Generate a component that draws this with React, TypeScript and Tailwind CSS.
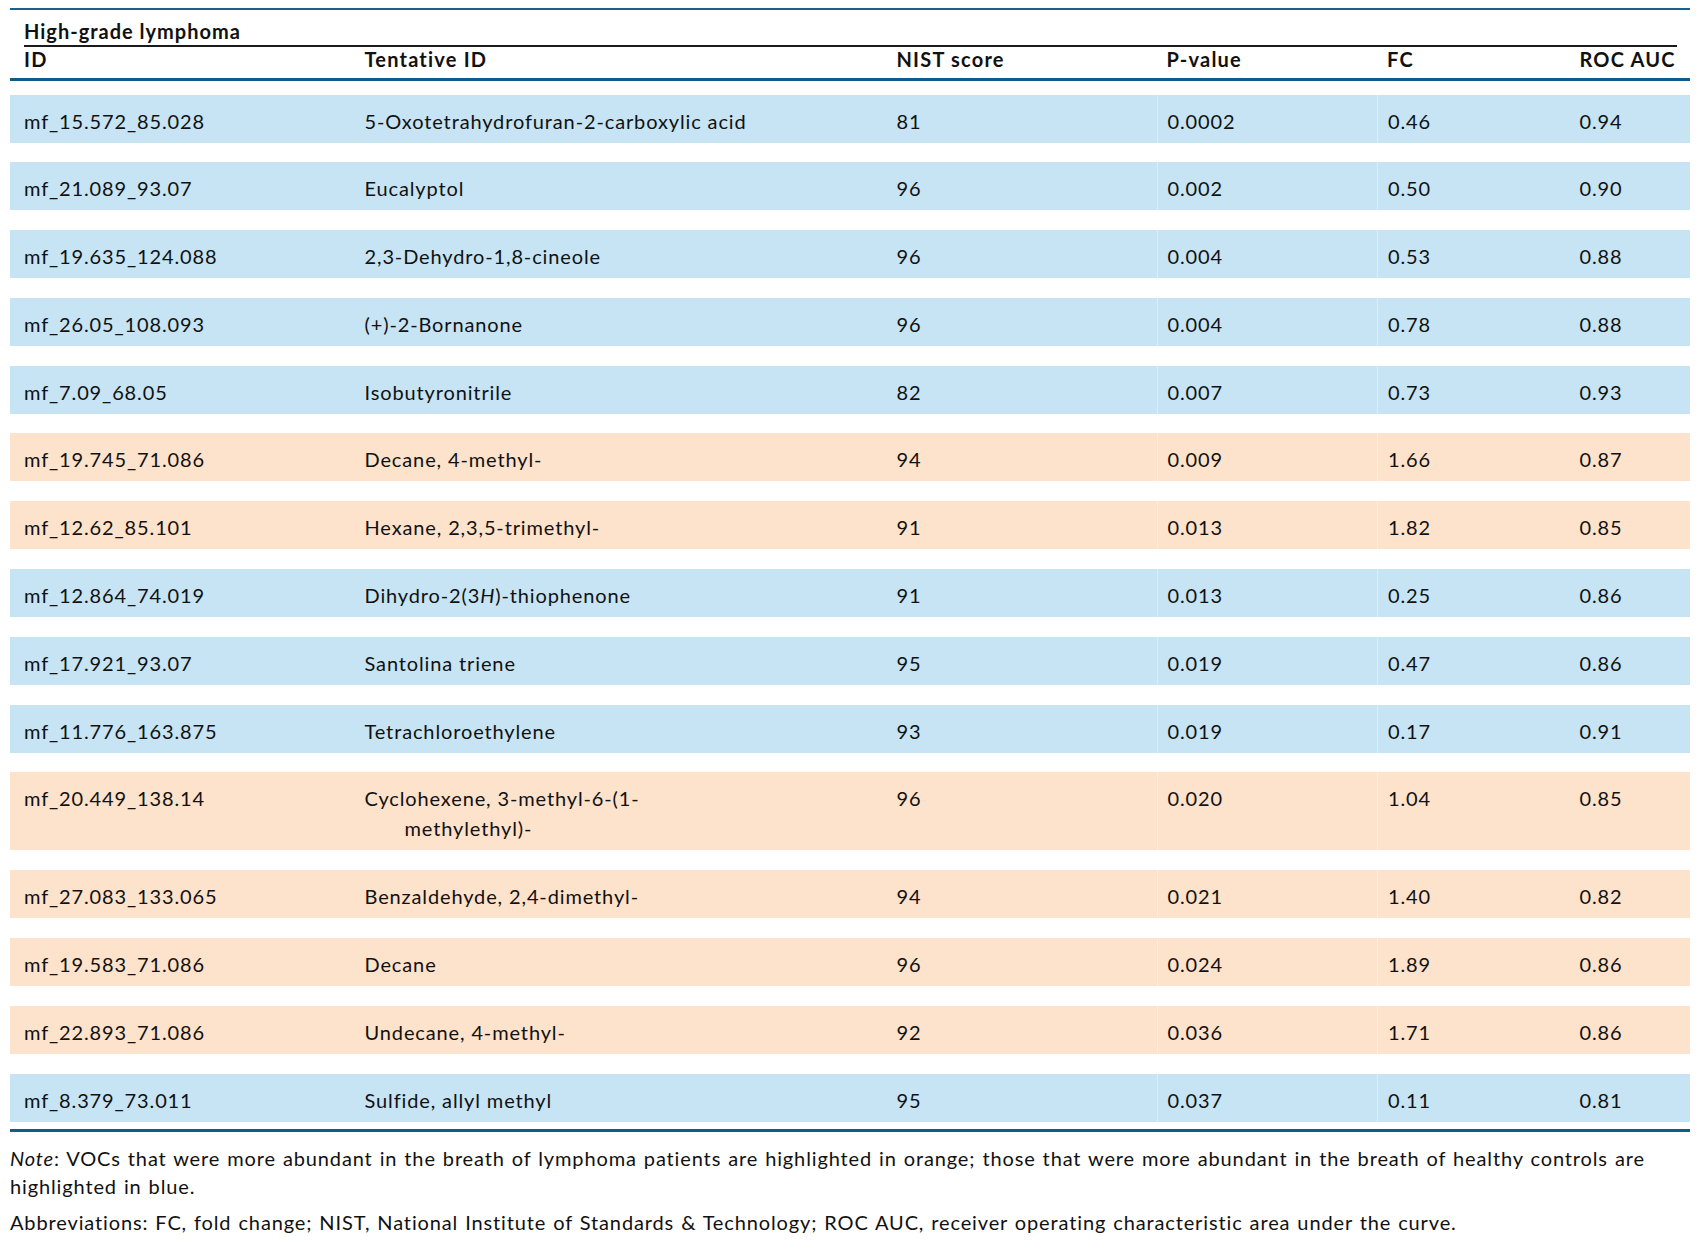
import type { ReactNode } from 'react';

type Row = {
  id: string;
  name: ReactNode;
  nist: string;
  p: string;
  fc: string;
  auc: string;
  up: boolean; // true = more abundant in lymphoma (orange)
};

const rows: Row[] = [
  { id: 'mf_15.572_85.028', name: '5-Oxotetrahydrofuran-2-carboxylic acid', nist: '81', p: '0.0002', fc: '0.46', auc: '0.94', up: false },
  { id: 'mf_21.089_93.07', name: 'Eucalyptol', nist: '96', p: '0.002', fc: '0.50', auc: '0.90', up: false },
  { id: 'mf_19.635_124.088', name: '2,3-Dehydro-1,8-cineole', nist: '96', p: '0.004', fc: '0.53', auc: '0.88', up: false },
  { id: 'mf_26.05_108.093', name: '(+)-2-Bornanone', nist: '96', p: '0.004', fc: '0.78', auc: '0.88', up: false },
  { id: 'mf_7.09_68.05', name: 'Isobutyronitrile', nist: '82', p: '0.007', fc: '0.73', auc: '0.93', up: false },
  { id: 'mf_19.745_71.086', name: 'Decane, 4-methyl-', nist: '94', p: '0.009', fc: '1.66', auc: '0.87', up: true },
  { id: 'mf_12.62_85.101', name: 'Hexane, 2,3,5-trimethyl-', nist: '91', p: '0.013', fc: '1.82', auc: '0.85', up: true },
  {
    id: 'mf_12.864_74.019',
    name: (
      <>
        Dihydro-2(3<i>H</i>)-thiophenone
      </>
    ),
    nist: '91', p: '0.013', fc: '0.25', auc: '0.86', up: false,
  },
  { id: 'mf_17.921_93.07', name: 'Santolina triene', nist: '95', p: '0.019', fc: '0.47', auc: '0.86', up: false },
  { id: 'mf_11.776_163.875', name: 'Tetrachloroethylene', nist: '93', p: '0.019', fc: '0.17', auc: '0.91', up: false },
  {
    id: 'mf_20.449_138.14',
    name: (
      <>
        <div>Cyclohexene, 3-methyl-6-(1-</div>
        <div className="pl-[40px]">methylethyl)-</div>
      </>
    ),
    nist: '96', p: '0.020', fc: '1.04', auc: '0.85', up: true,
  },
  { id: 'mf_27.083_133.065', name: 'Benzaldehyde, 2,4-dimethyl-', nist: '94', p: '0.021', fc: '1.40', auc: '0.82', up: true },
  { id: 'mf_19.583_71.086', name: 'Decane', nist: '96', p: '0.024', fc: '1.89', auc: '0.86', up: true },
  { id: 'mf_22.893_71.086', name: 'Undecane, 4-methyl-', nist: '92', p: '0.036', fc: '1.71', auc: '0.86', up: true },
  { id: 'mf_8.379_73.011', name: 'Sulfide, allyl methyl', nist: '95', p: '0.037', fc: '0.11', auc: '0.81', up: false },
];

const cols = 'grid grid-cols-[344.5px_532px_270px_220.5px_192.5px_120.5px]';

export default function App() {
  return (
    <div className="w-[1701px] h-[1245px] bg-white text-[20px] tracking-[0.87px] text-[#111] font-['Lato','Liberation_Sans',sans-serif]">
      <div className="w-[1690px] pt-[8px] pl-[10px]">
        {/* top rule */}
        <div className="h-[2px] bg-[#1b5f8c]" />

        {/* title + column headers */}
        <div className="pl-[14px] pr-[13px]">
          <div className="h-[35px] pt-[6.5px] leading-[28px] font-bold tracking-[1px]">High-grade lymphoma</div>
          <div className="h-[1.5px] bg-[#1a1a1a]" />
        </div>
        <div className={`${cols} h-[31px] pt-[1px] leading-[22px] font-bold tracking-[1.2px]`}>
          <div className="pl-[14px]">ID</div>
          <div className="pl-[10px]">Tentative ID</div>
          <div className="pl-[10px]">NIST score</div>
          <div className="pl-[10px]">P-value</div>
          <div className="pl-[10px]">FC</div>
          <div className="pl-[10px] whitespace-nowrap">ROC AUC</div>
        </div>
        <div className="h-[3px] bg-[#0f5b8a]" />

        {/* body */}
        <div className="mt-[14px] flex flex-col gap-[19.8px]">
          {rows.map((r) => (
            <div
              key={r.id}
              className={`${cols} min-h-[48px] pt-[11px] pb-[7px] leading-[30px] ${r.up ? 'bg-[#fde2cc]' : 'bg-[#c6e4f4]'}`}
            >
              <div className="pl-[14px]">{r.id}</div>
              <div className="pl-[10px]">{r.name}</div>
              <div className="pl-[10px]">{r.nist}</div>
              <div className="pl-[10px] -my-[11px] py-[11px] border-l border-white/35">{r.p}</div>
              <div className="pl-[10px] -my-[11px] py-[11px] border-l border-white/35">{r.fc}</div>
              <div className="pl-[10px]">{r.auc}</div>
            </div>
          ))}
        </div>

        {/* bottom rule */}
        <div className="mt-[7px] h-[3px] bg-[#0f5b8a]" />

        {/* footnotes */}
        <div className="mt-[12px] leading-[28.5px] whitespace-nowrap [word-spacing:1px]">
          <p>
            <i>Note</i>: VOCs that were more abundant in the breath of lymphoma patients are highlighted in orange; those
            that were more abundant in the breath of healthy controls are
            <br />
            highlighted in blue.
          </p>
          <p className="mt-[7px]">
            Abbreviations: FC, fold change; NIST, National Institute of Standards &amp; Technology; ROC AUC, receiver
            operating characteristic area under the curve.
          </p>
        </div>
      </div>
    </div>
  );
}
